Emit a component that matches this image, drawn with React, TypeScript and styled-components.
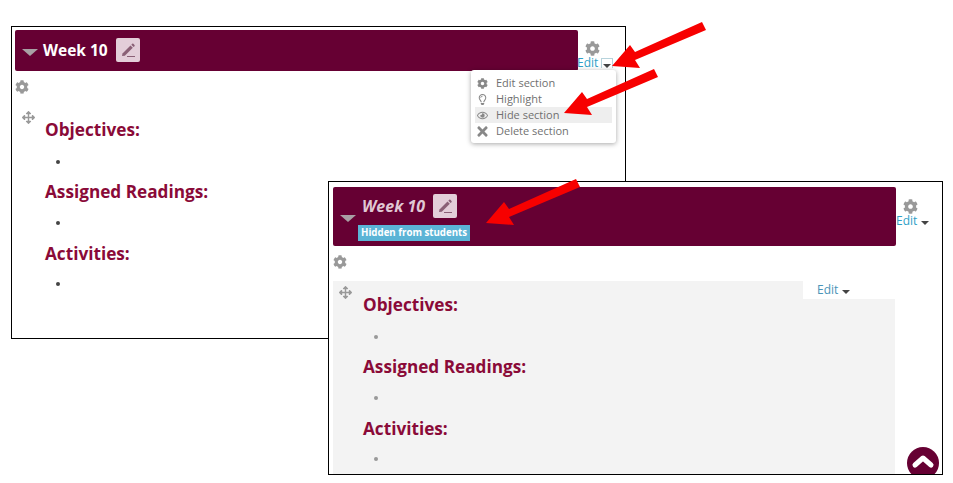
import React from 'react';
import styled, { createGlobalStyle } from 'styled-components';
import { FaCog, FaArrowsAlt, FaRegEye, FaRegLightbulb, FaTimes } from 'react-icons/fa';

const GlobalStyle = createGlobalStyle`
  html, body {
    margin: 0;
    padding: 0;
    background: #fff;
    font-family: "Open Sans", "Liberation Sans", sans-serif;
  }
`;

const Canvas = styled.div`
  position: relative;
  width: 953px;
  height: 483px;
  overflow: hidden;
  background: #fff;
`;

type WindowProps = { $left: number; $top: number; $width: number; $height: number; $inset: number };

const Shot = styled.div<WindowProps>`
  position: absolute;
  left: ${({ $left }) => $left}px;
  top: ${({ $top }) => $top}px;
  width: ${({ $width }) => $width}px;
  height: ${({ $height }) => $height}px;
  box-sizing: border-box;
  border: 1px solid #000;
  background: #fff;
  overflow: hidden;
  padding: 3px 0 0 ${({ $inset }) => $inset}px;
`;

const HeaderRow = styled.div<{ $pad?: number }>`
  display: flex;
  align-items: stretch;
  padding-top: ${({ $pad }) => $pad || 0}px;
`;

const Banner = styled.div<{ $height: number }>`
  width: 563px;
  height: ${({ $height }) => $height}px;
  flex: none;
  box-sizing: border-box;
  background: #660033;
  border-radius: 2px;
  display: flex;
  align-items: center;
  padding-left: 7px;
  gap: 5px;
`;

const Caret = styled.span`
  width: 0;
  height: 0;
  flex: none;
  border-left: 8px solid transparent;
  border-right: 8px solid transparent;
  border-top: 7px solid #a8a0a4;
  margin-top: 3px;
`;

const TitleStack = styled.div`
  display: flex;
  flex-direction: column;
  align-items: flex-start;
  gap: 7px;
  padding-top: 2px;
  margin-left: 1px;
`;

const TitleLine = styled.div<{ $lift?: number }>`
  display: flex;
  align-items: center;
  gap: 8px;
  margin-bottom: ${({ $lift }) => $lift || 0}px;
`;

const Title = styled.span<{ $hidden?: boolean }>`
  font-size: ${({ $hidden }) => ($hidden ? 16 : 15.5)}px;
  line-height: 24px;
  font-weight: 700;
  font-style: ${({ $hidden }) => ($hidden ? 'italic' : 'normal')};
  color: ${({ $hidden }) => ($hidden ? '#e0c8d4' : '#fff')};
`;

const PencilBox = styled.span`
  width: 24px;
  height: 24px;
  border-radius: 2px;
  background: #e3ced9;
  display: flex;
  align-items: center;
  justify-content: center;
`;

const HiddenBadge = styled.span`
  background: #5bb4d6;
  color: #fff;
  font-size: 9.7px;
  line-height: 16px;
  font-weight: 700;
  padding: 0 3px;
  margin-left: -4px;
`;

const EditColumn = styled.div<{ $offset: number }>`
  display: flex;
  flex-direction: column;
  align-items: flex-start;
  gap: 1px;
  width: 30px;
  margin-top: ${({ $offset }) => $offset}px;
`;

const GreyGear = styled.span<{ $size: number; $indent?: number }>`
  display: flex;
  color: #999;
  font-size: ${({ $size }) => $size}px;
  line-height: 1;
  margin-left: ${({ $indent }) => $indent || 0}px;
`;

const EditLink = styled.span<{ $shift?: number; $muted?: boolean }>`
  display: flex;
  align-items: center;
  gap: 4px;
  font-size: 12px;
  line-height: 12px;
  color: ${({ $muted }) => ($muted ? '#4a94b8' : '#2f9fc7')};
  white-space: nowrap;
  margin-left: ${({ $shift }) => $shift || 0}px;
`;

const SmallCaret = styled.i<{ $boxed?: boolean }>`
  display: block;
  width: 0;
  height: 0;
  margin-top: ${({ $boxed }) => ($boxed ? 5 : 4)}px;
  border-left: 4px solid transparent;
  border-right: 4px solid transparent;
  border-top: 4px solid #444;
`;

const CaretBox = styled.span`
  display: flex;
  justify-content: center;
  width: 10px;
  height: 9px;
  border: 1px solid #b7d3dc;
  border-bottom: 0;
  margin-left: -1px;
`;

const GearRow = styled.div<{ $top: number }>`
  padding-top: ${({ $top }) => $top}px;
  height: 14px;
`;

const Content = styled.div<{ $grey?: boolean; $top: number }>`
  position: relative;
  box-sizing: border-box;
  width: 562px;
  margin-top: ${({ $top }) => $top}px;
  padding: 10px 0 40px 30px;
  background: ${({ $grey }) => ($grey ? '#f3f3f3' : 'transparent')};
`;

const MoveIcon = styled.span<{ $left: number; $top: number }>`
  position: absolute;
  left: ${({ $left }) => $left}px;
  top: ${({ $top }) => $top}px;
  display: flex;
  color: #999;
  font-size: 13px;
`;

const Heading = styled.h3<{ $nudge?: number }>`
  margin: ${({ $nudge }) => $nudge || 0}px 0 ${({ $nudge }) => -($nudge || 0)}px;
  font-size: 17.2px;
  line-height: 28px;
  font-weight: 700;
  color: #8a0a38;
`;

const BulletList = styled.ul`
  margin: 0;
  padding: 0 0 0 11px;
  height: 33px;
  display: flex;
  align-items: center;
`;

const Bullet = styled.li<{ $muted?: boolean }>`
  list-style: none;
  width: 4px;
  height: 4px;
  margin-top: 2px;
  border-radius: 50%;
  background: ${({ $muted }) => ($muted ? '#999' : '#444')};
`;

const EditTab = styled.div`
  position: absolute;
  right: 0;
  top: 0;
  width: 92px;
  height: 18px;
  background: #fff;
  display: flex;
  align-items: center;
  padding-left: 14px;
  box-sizing: border-box;
`;

const Menu = styled.div`
  position: absolute;
  left: 471px;
  top: 70px;
  width: 145px;
  height: 73px;
  box-sizing: border-box;
  padding: 5px 4px;
  background: #fff;
  border-radius: 3px;
  box-shadow: 0 1px 5px rgba(0, 0, 0, 0.35);
`;

const MenuItem = styled.div<{ $active?: boolean }>`
  height: 16px;
  box-sizing: border-box;
  padding: 0 0 2px 2px;
  display: flex;
  align-items: center;
  gap: 8px;
  font-size: 11px;
  color: #707070;
  background: ${({ $active }) => ($active ? '#eee' : 'transparent')};

  > svg {
    width: 11px;
    height: 11px;
    margin-top: 2px;
    color: #888;
    flex: none;
  }
`;

const CloseIcon = styled(FaTimes)`
  && {
    width: 15px;
    height: 15px;
    margin: 2px -2px 0;
  }
`;

const TopButton = styled.span`
  position: absolute;
  left: 578px;
  top: 265px;
  width: 32px;
  height: 32px;
  box-sizing: border-box;
  padding-bottom: 5px;
  border-radius: 50%;
  background: #660033;
  display: flex;
  align-items: center;
  justify-content: center;
`;

const ArrowSvg = styled.svg<{ $left: number; $top: number }>`
  position: absolute;
  left: ${({ $left }) => $left}px;
  top: ${({ $top }) => $top}px;
`;

const PencilIcon = () => (
  <svg width="16" height="16" viewBox="0 0 16 16">
    <path d="M2.5 11.5 L10.5 3.5 L12.8 5.8 L4.8 13.8 L2 14 Z" fill="#8a6076" />
    <path d="M11.3 2.7 L12.2 1.8 Q12.8 1.3 13.4 1.8 L14.5 3 Q15 3.6 14.5 4.2 L13.6 5 Z" fill="#8a6076" />
    <rect x="7" y="14" width="8" height="1" fill="#8a6076" />
  </svg>
);

const ChevronIcon = () => (
  <svg width="24" height="16" viewBox="0 0 24 16">
    <polyline points="4,12 12,5 20,12" fill="none" stroke="#fff" strokeWidth="5" strokeLinecap="round" strokeLinejoin="round" />
  </svg>
);

// tip at (1,44), tail towards the upper right
const Arrow = ({ left, top }: { left: number; top: number }) => (
  <ArrowSvg $left={left} $top={top} width="100" height="50" viewBox="0 0 100 50">
    <polygon points="1,44 19,23 24,30 91,0 95,8 24,38 29,46" fill="#f70000" />
  </ArrowSvg>
);

const Section = ({ muted }: { muted?: boolean }) => (
  <>
    <Heading>Objectives:</Heading>
    <BulletList><Bullet $muted={muted} /></BulletList>
    <Heading $nudge={1}>Assigned Readings:</Heading>
    <BulletList><Bullet $muted={muted} /></BulletList>
    <Heading $nudge={2}>Activities:</Heading>
    <BulletList><Bullet $muted={muted} /></BulletList>
  </>
);

export default function App() {
  return (
    <Canvas>
      <GlobalStyle />

      <Shot $left={11} $top={26} $width={615} $height={313} $inset={3}>
        <HeaderRow>
          <Banner $height={41}>
            <Caret />
            <TitleLine $lift={2}>
              <Title>Week 10</Title>
              <PencilBox><PencilIcon /></PencilBox>
            </TitleLine>
          </Banner>
          <EditColumn $offset={11}>
            <GreyGear $size={15} $indent={7}><FaCog /></GreyGear>
            <EditLink $shift={-1}>Edit<CaretBox><SmallCaret $boxed /></CaretBox></EditLink>
          </EditColumn>
        </HeaderRow>
        <GearRow $top={9}><GreyGear $size={14}><FaCog /></GreyGear></GearRow>
        <Content $top={12}>
          <MoveIcon $left={7} $top={5}><FaArrowsAlt /></MoveIcon>
          <Section />
        </Content>
      </Shot>

      <Menu>
        <MenuItem><FaCog />Edit section</MenuItem>
        <MenuItem><FaRegLightbulb />Highlight</MenuItem>
        <MenuItem $active><FaRegEye />Hide section</MenuItem>
        <MenuItem><CloseIcon />Delete section</MenuItem>
      </Menu>

      <Shot $left={328} $top={181} $width={615} $height={294} $inset={4}>
        <HeaderRow $pad={2}>
          <Banner $height={59}>
            <Caret />
            <TitleStack>
              <TitleLine>
                <Title $hidden>Week 10</Title>
                <PencilBox><PencilIcon /></PencilBox>
              </TitleLine>
              <HiddenBadge>Hidden from students</HiddenBadge>
            </TitleStack>
          </Banner>
          <EditColumn $offset={12}>
            <GreyGear $size={15} $indent={7}><FaCog /></GreyGear>
            <EditLink>Edit<SmallCaret /></EditLink>
          </EditColumn>
        </HeaderRow>
        <GearRow $top={9}><GreyGear $size={14}><FaCog /></GreyGear></GearRow>
        <Content $grey $top={12}>
          <EditTab>
            <EditLink $muted>Edit<SmallCaret /></EditLink>
          </EditTab>
          <MoveIcon $left={6} $top={5}><FaArrowsAlt /></MoveIcon>
          <Section muted />
        </Content>
        <TopButton><ChevronIcon /></TopButton>
      </Shot>

      <Arrow left={611} top={22} />
      <Arrow left={563} top={69} />
      <Arrow left={485} top={179} />
    </Canvas>
  );
}
